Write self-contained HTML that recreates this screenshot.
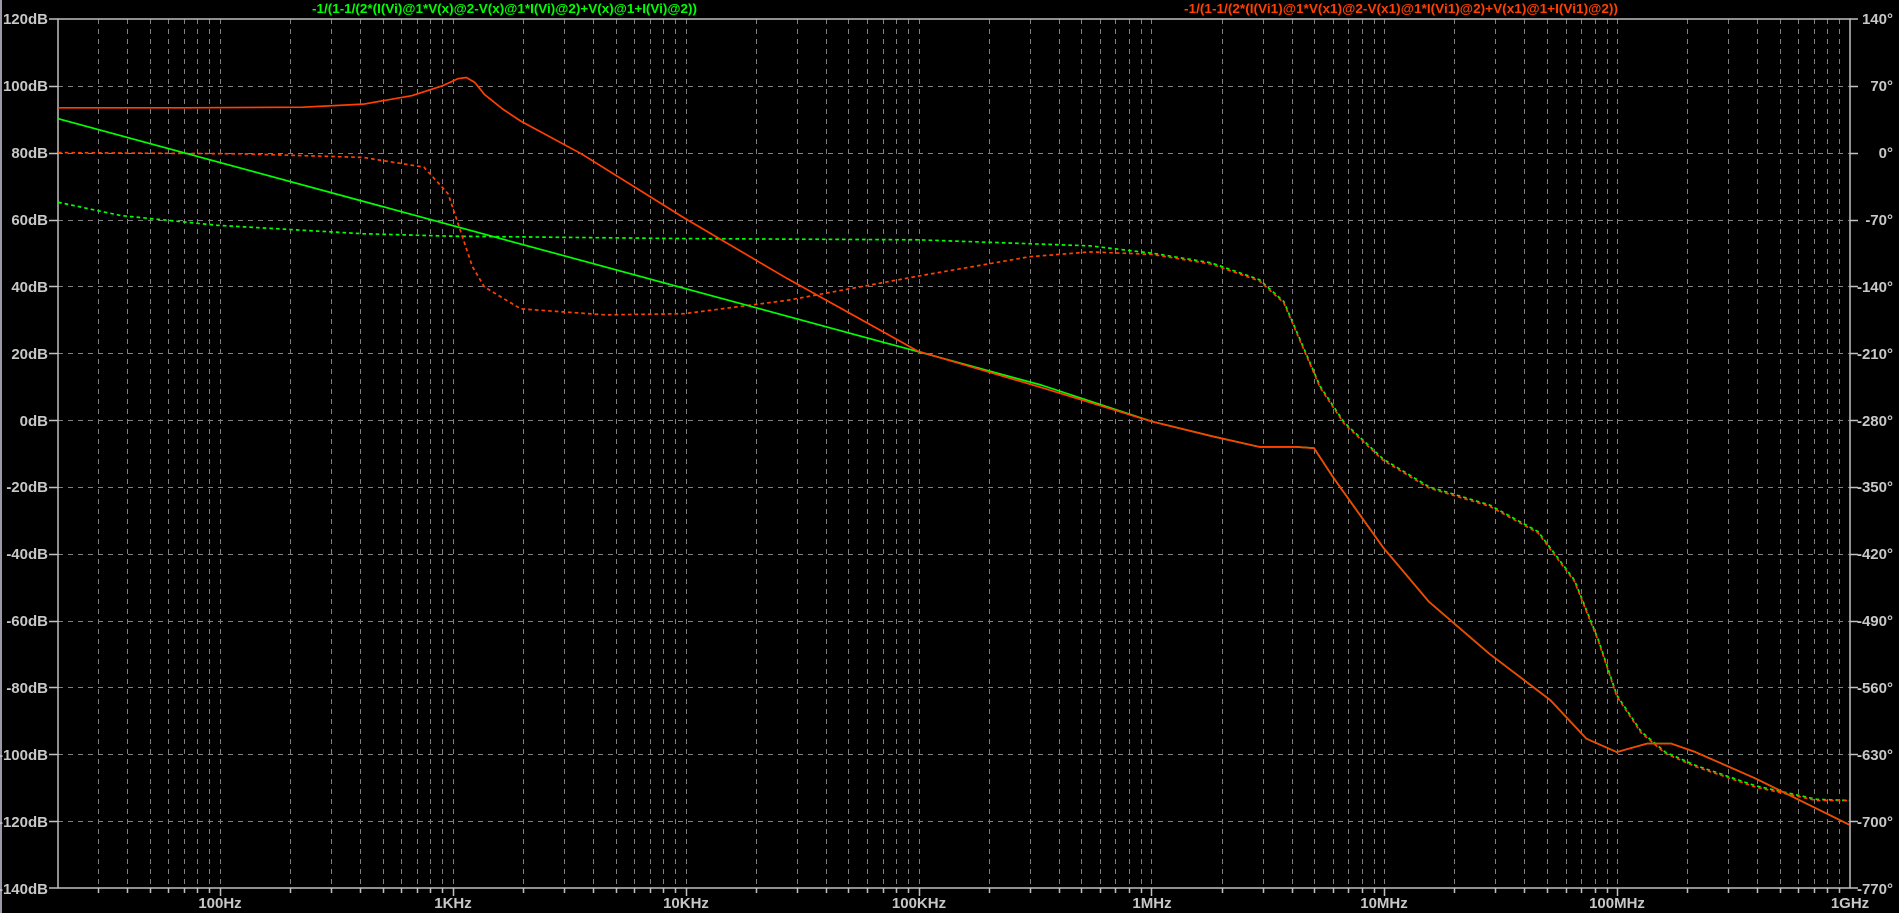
<!DOCTYPE html>
<html><head><meta charset="utf-8"><style>
html,body{margin:0;padding:0;background:#000;overflow:hidden}
svg{display:block}
text{font-family:"Liberation Sans","DejaVu Sans",sans-serif;font-weight:bold}
</style></head><body>
<svg id="s" width="1899" height="913" viewBox="0 0 1899 913" xmlns="http://www.w3.org/2000/svg">
<rect width="1899" height="913" fill="#000"/>
<rect x="0" y="0" width="2" height="913" fill="#9a9aa8"/>
<g id="grid" stroke="#808080" stroke-width="1" stroke-dasharray="5,5" fill="none"></g>
<g id="ticks" stroke="#c0c0c0" stroke-width="1.5" fill="none"></g>
<rect x="58" y="19" width="1792" height="869" fill="none" stroke="#c0c0c0" stroke-width="1.5"/>
<g fill="#c8c8c8" font-size="15" text-anchor="end">
<text x="48" y="24">120dB</text>
<text x="48" y="91">100dB</text>
<text x="48" y="158">80dB</text>
<text x="48" y="225">60dB</text>
<text x="48" y="292">40dB</text>
<text x="48" y="359">20dB</text>
<text x="48" y="426">0dB</text>
<text x="48" y="492">-20dB</text>
<text x="48" y="559">-40dB</text>
<text x="48" y="626">-60dB</text>
<text x="48" y="693">-80dB</text>
<text x="48" y="760">-100dB</text>
<text x="48" y="827">-120dB</text>
<text x="48" y="894">-140dB</text>
<text x="1893" y="24">140°</text>
<text x="1893" y="91">70°</text>
<text x="1893" y="158">0°</text>
<text x="1893" y="225">-70°</text>
<text x="1893" y="292">-140°</text>
<text x="1893" y="359">-210°</text>
<text x="1893" y="426">-280°</text>
<text x="1893" y="492">-350°</text>
<text x="1893" y="559">-420°</text>
<text x="1893" y="626">-490°</text>
<text x="1893" y="693">-560°</text>
<text x="1893" y="760">-630°</text>
<text x="1893" y="827">-700°</text>
<text x="1893" y="894">-770°</text>
</g>
<g fill="#c8c8c8" font-size="15" text-anchor="middle">
<text x="220" y="908">100Hz</text>
<text x="453" y="908">1KHz</text>
<text x="686" y="908">10KHz</text>
<text x="919" y="908">100KHz</text>
<text x="1152" y="908">1MHz</text>
<text x="1384" y="908">10MHz</text>
<text x="1617" y="908">100MHz</text>
<text x="1850" y="908">1GHz</text>
</g>
<text x="312" y="13" font-size="13" fill="#00ff00" textLength="385" lengthAdjust="spacingAndGlyphs">-1/(1-1/(2*(I(Vi)@1*V(x)@2-V(x)@1*I(Vi)@2)+V(x)@1+I(Vi)@2))</text>
<text x="1184" y="13" font-size="13" fill="#ff4000" textLength="434" lengthAdjust="spacingAndGlyphs">-1/(1-1/(2*(I(Vi1)@1*V(x1)@2-V(x1)@1*I(Vi1)@2)+V(x1)@1+I(Vi1)@2))</text>
<g transform="scale(1.2111)" fill="none" stroke-width="1.4" stroke-linejoin="round">
<polyline stroke="#00ff00" stroke-dasharray="3,2.5" points="48,167 100,178 179,186 300,193 372,195 565,197 758,198 900,203 951,209 1000,217 1040,231 1060,249 1075,284 1090,319 1110,349 1142,379 1180,402 1230,417 1270,439 1300,479 1320,529 1335,574 1355,604 1375,621 1400,632 1450,649 1500,660 1527,661"/>
<polyline stroke="#ff4000" stroke-dasharray="3,2.5" points="48,126 200,127 300,130 350,138 370,160 380,190 390,220 400,237 430,255 500,260 565,259 650,248 758,228 850,212 900,208 951,210 1000,218 1040,232 1060,250 1075,285 1090,320 1110,350 1142,380 1180,403 1230,418 1270,440 1300,480 1320,530 1335,575 1355,605 1375,622 1400,633 1450,650 1500,661 1527,661"/>
<polyline stroke="#00ff00" points="48,98 860,318 951,348 1000,360 1040,369 1070,369 1085,370 1100,393 1142,452 1180,497 1230,540 1280,578 1310,610 1335,621 1360,614 1380,614 1400,621 1450,643 1527,681"/>
<polyline stroke="#ff4000" points="48,89 150,89 250,88.5 300,86 340,79 365,71 378,65 385,64 392,68 400,78 415,90 430,100 480,127 565,180 650,230 758,290 860,320 951,348 1000,360 1040,369 1070,369 1085,370 1100,393 1142,452 1180,497 1230,540 1280,578 1310,610 1335,621 1360,614 1380,614 1400,621 1450,643 1527,681"/>
</g>
</svg>
<script>
var g=document.getElementById('grid'),t=document.getElementById('ticks'),ns='http://www.w3.org/2000/svg';
function L(p,x1,y1,x2,y2){var l=document.createElementNS(ns,'line');l.setAttribute('x1',x1);l.setAttribute('y1',y1);l.setAttribute('x2',x2);l.setAttribute('y2',y2);p.appendChild(l);}
for(var d=1;d<=9;d++){for(var m=1;m<=9;m++){var lf=d+Math.log10(m);if(lf<Math.log10(20)-1e-6||lf>9)continue;var x=Math.round(220+(lf-2)*232.86)+0.5;if(x<=59||x>=1849)continue;L(g,x,19,x,888);L(t,x,888,x,m==1?896:893);}}
for(var i=1;i<13;i++){var y=Math.round(19+i*869/13)+0.5;L(g,58,y,1850,y);L(t,49,y,58,y);L(t,1850,y,1858,y);}
L(t,49,19,58,19);L(t,1850,19,1858,19);L(t,49,888,58,888);L(t,1850,888,1858,888);
</script>
</body></html>
